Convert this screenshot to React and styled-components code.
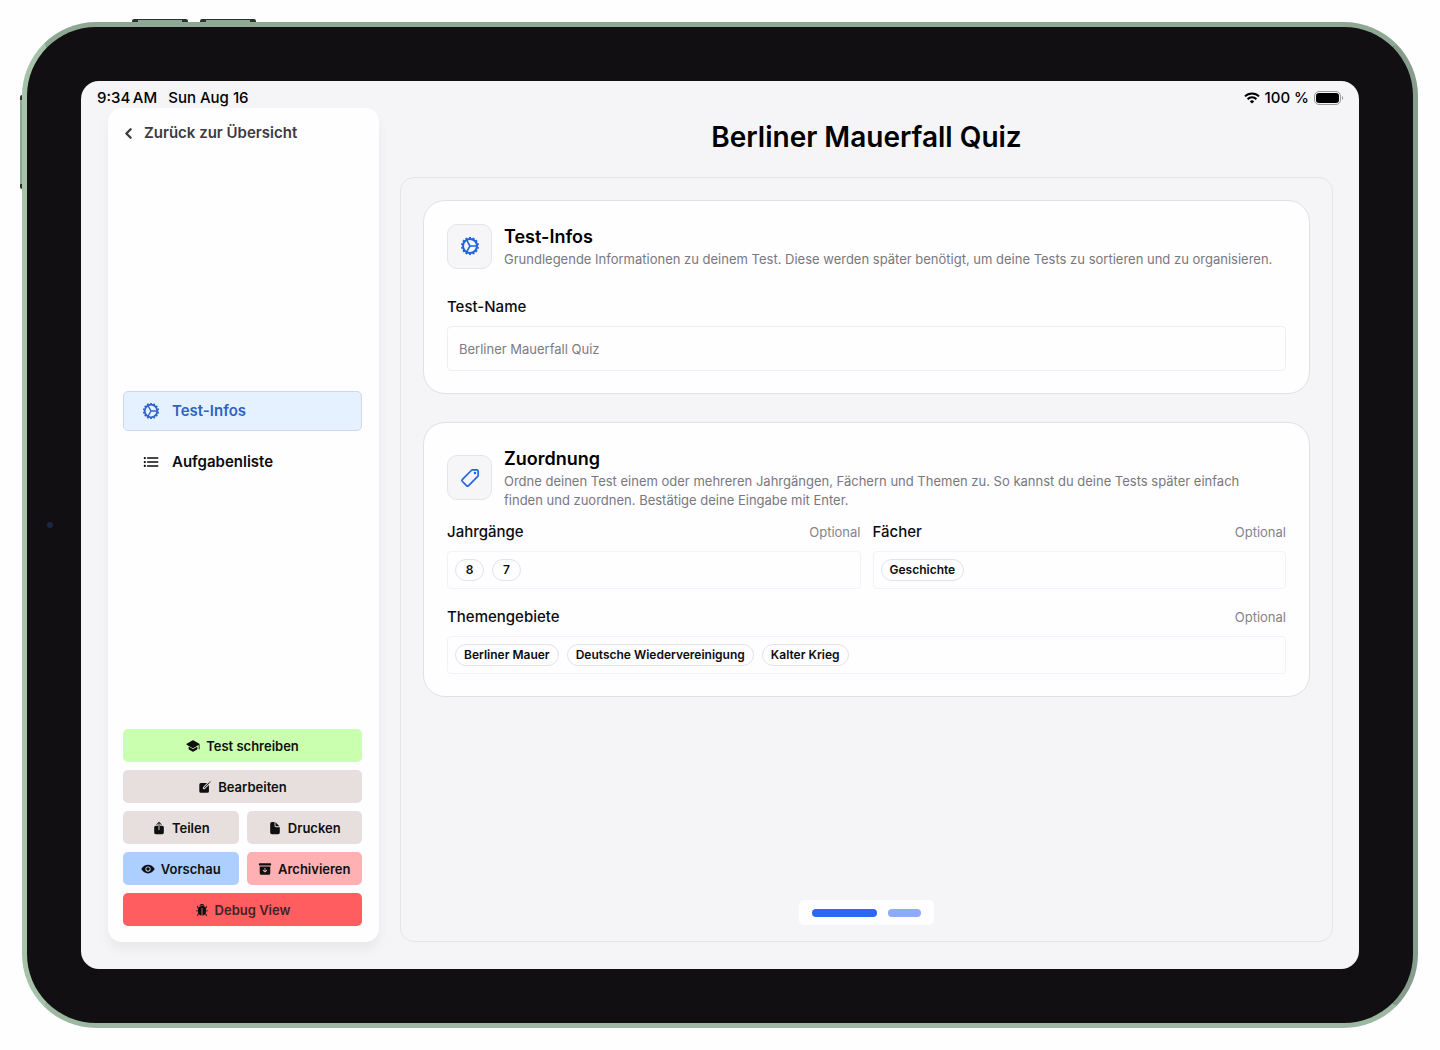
import React, { useState } from 'react';
import styled, { createGlobalStyle } from 'styled-components';
import {
  IoArchive,
  IoBug,
  IoChevronBack,
  IoCreate,
  IoDocument,
  IoEye,
  IoListOutline,
  IoPricetagOutline,
  IoSchool,
  IoShare,
} from 'react-icons/io5';

const actions = [
  { label: 'Test schreiben', icon: IoSchool, color: '#cbffb0', wide: true },
  { label: 'Bearbeiten', icon: IoCreate, color: '#e7dfdd', wide: true },
  { label: 'Teilen', icon: IoShare, color: '#e7dfdd' },
  { label: 'Drucken', icon: IoDocument, color: '#e7dfdd' },
  { label: 'Vorschau', icon: IoEye, color: '#accfff' },
  { label: 'Archivieren', icon: IoArchive, color: '#ffb0b3' },
  { label: 'Debug View', icon: IoBug, color: '#ff5d60', text: '#3b2528', wide: true },
];

const teeth = Array.from({ length: 14 }, (_, i) => (i * 360) / 14);

const Cog = ({ size }) => (
  <svg width={size} height={size} viewBox="0 0 20 20" fill="none" stroke="currentColor" aria-hidden="true">
    <circle cx="10" cy="10" r="7" strokeWidth="2" />
    <path d="M10 10h7M10 10 6.5 3.9M10 10 6.5 16.1" strokeWidth="1.6" />
    {teeth.map((angle) => (
      <path key={angle} d="M10 1v1.6" strokeWidth="2" transform={`rotate(${angle} 10 10)`} />
    ))}
  </svg>
);

const TagInput = ({ id, label, tags, wide }) => (
  <Field $wide={wide}>
    <LabelRow>
      <Label htmlFor={id}>{label}</Label>
      <Optional>Optional</Optional>
    </LabelRow>
    <TagBox>
      {tags.map((tag) => (
        <Tag key={tag}>{tag}</Tag>
      ))}
      <TagEntry id={id} type="text" />
    </TagBox>
  </Field>
);

const CardHeader = ({ icon: Icon, title, children }) => (
  <Header>
    <IconBox>
      <Icon size={20} />
    </IconBox>
    <div>
      <CardTitle>{title}</CardTitle>
      <Description>{children}</Description>
    </div>
  </Header>
);

const Wifi = () => (
  <svg width="16" height="12" viewBox="0 0 16 12" fill="none" stroke="#000" aria-hidden="true">
    <path d="M1 4.4a10 10 0 0 1 14 0" strokeWidth="2" />
    <path d="M3.6 7.2a6.2 6.2 0 0 1 8.8 0" strokeWidth="2" />
    <path d="M8 11.6 5.8 9.4a3.1 3.1 0 0 1 4.4 0z" fill="#000" stroke="none" />
  </svg>
);

const Battery = () => (
  <svg width="30" height="14" viewBox="0 0 30 14" fill="none" aria-hidden="true">
    <rect x="0.5" y="0.5" width="26" height="13" rx="4.5" stroke="#9a9a9c" />
    <rect x="2" y="2" width="23" height="10" rx="3" fill="#000" />
    <path d="M28 5c1.6.6 1.6 3.4 0 4z" fill="#9a9a9c" />
  </svg>
);

const App = () => {
  const [name, setName] = useState('Berliner Mauerfall Quiz');

  return (
    <Page>
      <GlobalStyle />
      <Device>
        <VolumeKey />
        <VolumeKey $second />
        <PowerKey />
        <Camera />
        <Screen>
          <StatusBar>
            <StatusGroup $gap={11}>
              <span>9:34{'\u2009'}AM</span>
              <span>Sun Aug 16</span>
            </StatusGroup>
            <StatusGroup $gap={5}>
              <Wifi />
              <span>100 %</span>
              <Battery />
            </StatusGroup>
          </StatusBar>
          <Layout>
            <Sidebar>
              <BackLink href="#">
                <IoChevronBack size={15} />
                Zurück zur Übersicht
              </BackLink>
              <Nav>
                <NavLink href="#infos" $active>
                  <Cog size={18} />
                  Test-Infos
                </NavLink>
                <NavLink href="#aufgaben">
                  <ListIcon size={18} />
                  Aufgabenliste
                </NavLink>
              </Nav>
              <Actions>
                {actions.map(({ label, icon: Icon, color, text, wide }) => (
                  <ActionButton key={label} type="button" $color={color} $text={text} $wide={wide}>
                    <Icon size={14} color="#0f0f10" />
                    {label}
                  </ActionButton>
                ))}
              </Actions>
            </Sidebar>
            <Content>
              <Title>Berliner Mauerfall Quiz</Title>
              <Panel>
                <Card>
                  <CardHeader icon={Cog} title="Test-Infos">
                    Grundlegende Informationen zu deinem Test. Diese werden später benötigt, um deine
                    Tests zu sortieren und zu organisieren.
                  </CardHeader>
                  <NameField>
                    <Label htmlFor="name">Test-Name</Label>
                    <TextInput
                      id="name"
                      type="text"
                      value={name}
                      onChange={(e) => setName(e.target.value)}
                    />
                  </NameField>
                </Card>
                <Card>
                  <CardHeader icon={TagIcon} title="Zuordnung">
                    Ordne deinen Test einem oder mehreren Jahrgängen, Fächern und Themen zu. So kannst
                    du deine Tests später einfach finden und zuordnen. Bestätige deine Eingabe mit
                    Enter.
                  </CardHeader>
                  <FieldGrid>
                    <TagInput id="years" label="Jahrgänge" tags={['8', '7']} />
                    <TagInput id="subjects" label="Fächer" tags={['Geschichte']} />
                    <TagInput
                      id="topics"
                      label="Themengebiete"
                      tags={['Berliner Mauer', 'Deutsche Wiedervereinigung', 'Kalter Krieg']}
                      wide
                    />
                  </FieldGrid>
                </Card>
                <Pager>
                  <PagerButton type="button" aria-label="Seite 1" $active />
                  <PagerButton type="button" aria-label="Seite 2" />
                </Pager>
              </Panel>
            </Content>
          </Layout>
        </Screen>
      </Device>
    </Page>
  );
};

export default App;

const GlobalStyle = createGlobalStyle`
  * {
    box-sizing: border-box;
  }

  body {
    margin: 0;
    background: #fefdff;
    color: #0c0c0e;
    font-family: Inter, "Liberation Sans", sans-serif;
    font-size: 15px;
    line-height: 20px;
  }

  button, input {
    font-family: inherit;
  }
`;

const Page = styled.div`
  display: flex;
  min-height: 100vh;
  padding: 22px;
`;

/* tablet frame */

const Device = styled.div`
  position: relative;
  display: flex;
  flex: 1;
  padding: 54px;
  border: 5px solid;
  border-color: #8ea894 #869d8b #9db8a0 #a6c2a9;
  border-radius: 74px;
  background: #110f12;
`;

const VolumeKey = styled.span`
  position: absolute;
  top: -8px;
  left: ${(props) => (props.$second ? 173 : 105)}px;
  width: 56px;
  height: 3px;
  border: solid #2c332e;
  border-width: 1px 6px 0;
  border-radius: 2px 2px 0 0;
  background: #8ea894;
`;

const PowerKey = styled.span`
  position: absolute;
  top: 68px;
  left: -7px;
  width: 2px;
  height: 94px;
  border: solid #2c332e;
  border-width: 5px 0;
  border-radius: 2px 0 0 2px;
  background: #8ea894;
`;

const Camera = styled.span`
  position: absolute;
  top: calc(50% - 3px);
  left: 20px;
  width: 6px;
  height: 6px;
  border-radius: 50%;
  background: #1c2748;
`;

const Screen = styled.div`
  display: flex;
  flex-direction: column;
  flex: 1;
  min-width: 0;
  border-radius: 18px;
  background: #f5f4f7;
`;

const StatusBar = styled.div`
  display: flex;
  justify-content: space-between;
  padding: 7px 15px 0 16px;
  color: #000;
  font-weight: 500;
`;

const StatusGroup = styled.div`
  display: flex;
  align-items: center;
  gap: ${(props) => props.$gap}px;
`;

const Layout = styled.div`
  display: flex;
  flex: 1;
  gap: 21px;
  padding: 0 26px 27px 27px;
`;

/* sidebar */

const Sidebar = styled.aside`
  display: flex;
  flex-direction: column;
  justify-content: space-between;
  flex: 0 0 271px;
  padding: 15px 17px 16px 15px;
  border-radius: 14px;
  background: #fefdff;
  box-shadow: 0 8px 12px rgba(0, 0, 0, 0.05);
`;

const BackLink = styled.a`
  display: flex;
  align-items: center;
  gap: 8px;
  margin-left: -2px;
  color: #3c3b3f;
  font-weight: 600;
  text-decoration: none;

  path {
    stroke-width: 80px;
  }
`;

const Nav = styled.nav`
  display: flex;
  flex-direction: column;
  gap: 11px;
`;

const NavLink = styled.a`
  display: flex;
  align-items: center;
  gap: 12px;
  height: 40px;
  padding: 0 18px;
  border: 1px solid ${(props) => (props.$active ? '#ccd9ec' : 'transparent')};
  border-radius: 5px;
  background: ${(props) => (props.$active ? '#e6f1ff' : 'transparent')};
  color: ${(props) => (props.$active ? '#2f63c4' : '#0c0c0e')};
  font-weight: 600;
  text-decoration: none;
`;

const ListIcon = styled(IoListOutline)`
  path, line {
    stroke-width: 42px;
  }
`;

const Actions = styled.div`
  display: grid;
  grid-template-columns: 1fr 1fr;
  gap: 8px;
`;

const ActionButton = styled.button`
  display: flex;
  align-items: center;
  justify-content: center;
  gap: 6px;
  grid-column: ${(props) => (props.$wide ? '1 / -1' : 'auto')};
  height: 33px;
  padding: 0;
  border: 0;
  border-radius: 5px;
  background: ${(props) => props.$color};
  color: ${(props) => props.$text || '#0f0f10'};
  font-size: 13px;
  font-weight: 600;
  cursor: pointer;
`;

/* content */

const Content = styled.main`
  display: flex;
  flex-direction: column;
  flex: 1;
  min-width: 0;
`;

const Title = styled.h1`
  margin: 0;
  padding: 9px 0 20px;
  color: #000;
  font-size: 28px;
  font-weight: 600;
  line-height: 40px;
  text-align: center;
`;

const Panel = styled.div`
  display: flex;
  flex-direction: column;
  flex: 1;
  gap: 28px;
  padding: 22px 22px 16px;
  border: 1px solid #e5e4e8;
  border-radius: 14px;
`;

const Card = styled.section`
  padding: 22px 23px;
  border: 1px solid #e1e0e4;
  border-radius: 22px;
  background: #fefdff;
`;

const Header = styled.div`
  display: flex;
  align-items: center;
  gap: 12px;
`;

const IconBox = styled.div`
  display: flex;
  align-items: center;
  justify-content: center;
  flex: 0 0 45px;
  height: 45px;
  border: 1px solid #e5e4e8;
  border-radius: 10px;
  background: #f6f5f8;
  color: #1f63e0;
`;

const TagIcon = styled(IoPricetagOutline)`
  path:first-of-type {
    stroke-width: 42px;
  }
`;

const CardTitle = styled.h2`
  margin: 0;
  color: #000;
  font-size: 18px;
  font-weight: 600;
  line-height: 27px;
`;

const Description = styled.p`
  margin: 0;
  padding-right: 10px;
  color: #79787d;
  font-size: 13px;
  line-height: 19px;
`;

const NameField = styled.div`
  display: flex;
  flex-direction: column;
  gap: 9px;
  margin-top: 28px;
`;

const Label = styled.label`
  font-weight: 500;
`;

const TextInput = styled.input`
  width: 100%;
  height: 45px;
  padding: 0 11px;
  border: 1px solid #efeef2;
  border-radius: 4px;
  background: transparent;
  color: #7d7c81;
  font-size: 13px;
`;

const FieldGrid = styled.div`
  display: grid;
  grid-template-columns: 1fr 1fr;
  gap: 18px 12px;
  margin-top: 12px;
`;

const Field = styled.div`
  grid-column: ${(props) => (props.$wide ? '1 / -1' : 'auto')};
  min-width: 0;
`;

const LabelRow = styled.div`
  display: flex;
  justify-content: space-between;
  margin-bottom: 9px;
`;

const Optional = styled.span`
  color: #85848a;
  font-size: 13px;
`;

const TagBox = styled.div`
  display: flex;
  align-items: center;
  gap: 8px;
  min-height: 38px;
  padding: 0 7px;
  border: 1px solid #f3f2f5;
  border-radius: 4px;
`;

const Tag = styled.span`
  min-width: 29px;
  padding: 0 8px;
  border: 1px solid #e3e2e6;
  border-radius: 11px;
  color: #0c0c0e;
  font-size: 12px;
  font-weight: 600;
  text-align: center;
  white-space: nowrap;
`;

const TagEntry = styled.input`
  flex: 1;
  min-width: 0;
  border: 0;
  outline: 0;
  background: transparent;
  font-size: 13px;
`;

const Pager = styled.div`
  display: flex;
  align-items: center;
  align-self: center;
  gap: 11px;
  height: 25px;
  margin-top: auto;
  padding: 0 13px;
  border-radius: 5px;
  background: #fefdff;
`;

const PagerButton = styled.button`
  width: ${(props) => (props.$active ? 65 : 33)}px;
  height: 8px;
  padding: 0;
  border: 0;
  border-radius: 4px;
  background: ${(props) => (props.$active ? '#2b68f5' : '#8eabf8')};
  cursor: pointer;
`;
